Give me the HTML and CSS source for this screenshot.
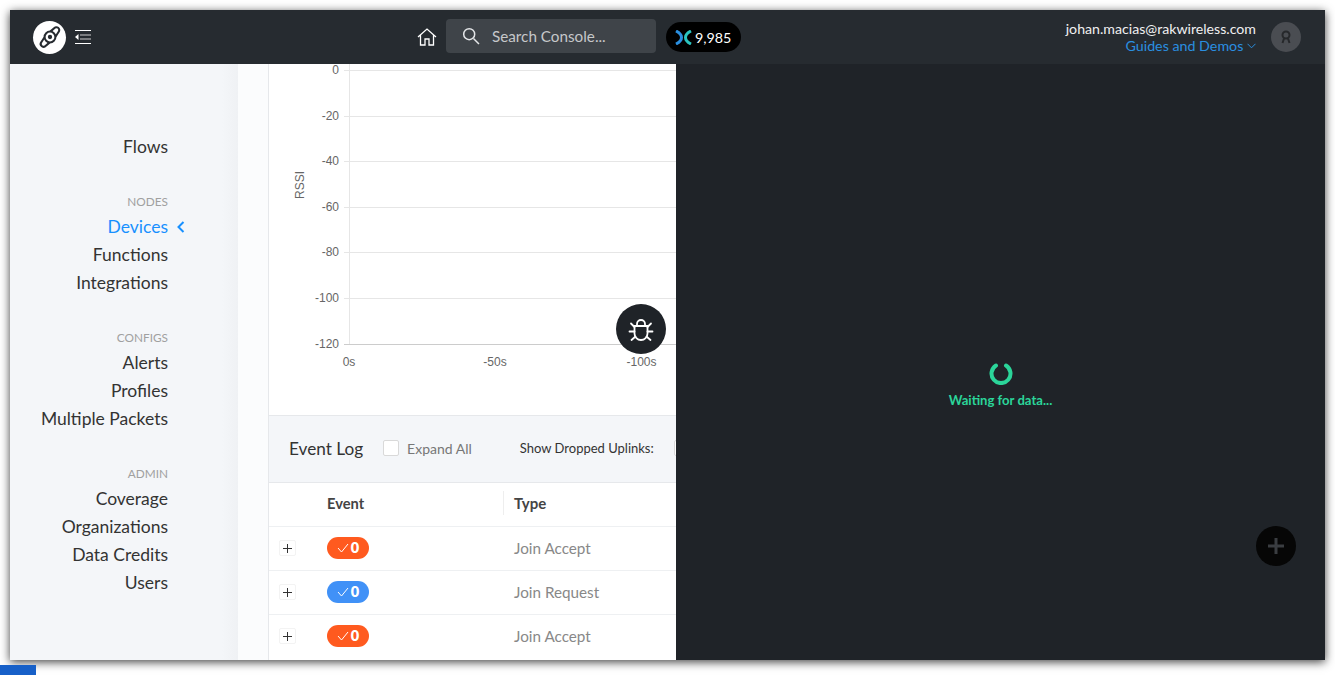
FILE: index.html
```html
<!DOCTYPE html>
<html lang="en">
<head>
<meta charset="utf-8">
<title>Console</title>
<link rel="stylesheet" href="styles.css">
</head>
<body>
<div class="window">
  <header class="topbar">
    <span class="logo">
      <svg width="26" height="26" viewBox="0 0 24 24" fill="none" stroke="#262b30" stroke-width="1.900"><circle cx="12" cy="12" r="5"/><circle cx="12" cy="12" r="2" fill="#262b30" stroke="none"/><path d="M12.500 6.800 15.800 4a2.500 2.500 0 1 1 4.200 3.200L17.200 11.500M11.500 17.200 8.200 20A2.500 2.500 0 1 1 4 16.800L6.800 12.500"/></svg>
    </span>
    <svg class="menu" width="16" height="14" viewBox="0 0 16 14" fill="none"><path d="M0 .5h16M0 13.500h16" stroke="#fff"/><path d="M5 5h11M5 9h11" stroke="#ccc"/><path d="M3.500 4v6L0 7z" fill="#fff"/></svg>
    <svg class="home" width="20" height="20" viewBox="0 0 20 20" fill="none" stroke="#fff" stroke-width="1.300"><path d="M1 10 10 2l9 8M3.500 8v10h4.500v-6h4v6h4.500V8"/></svg>
    <div class="search">
      <svg width="18" height="18" viewBox="0 0 18 18" fill="none" stroke="#e4e6e8" stroke-width="1.500"><circle cx="7.200" cy="7.200" r="5.500"/><path d="m11.500 11.500 5.500 5.500"/></svg>
      <span>Search Console...</span>
    </div>
    <div class="credits">
      <svg width="17" height="15" viewBox="0 0 17 15" fill="none" stroke-width="3"><path d="M1 1c4 2 5.500 4 5.500 6.500S5 12 1 14" stroke="#2a8fe0"/><path d="M16 1c-4 2-5.500 4-5.500 6.500S12 12 16 14" stroke="#2bc4c0"/></svg>
      <span>9,985</span>
    </div>
    <div class="account">
      <div class="account-text">
        <div class="email">johan.macias@rakwireless.com</div>
        <div class="guides">Guides and Demos
          <svg class="chev" width="9" height="6" viewBox="0 0 9 6" fill="none" stroke="#2a8fe0"><path d="m.5.800 4 4 4-4"/></svg>
        </div>
      </div>
      <span class="avatar">
        <svg width="12" height="14" viewBox="0 0 12 14" fill="none" stroke="#26282b" stroke-width="2"><circle cx="6" cy="5" r="3.500"/><path d="M2.500 13 4 8.500M9.500 13 8 8.500"/></svg>
      </span>
    </div>
  </header>

  <div class="workspace">
    <nav class="sidebar">
      <a class="nav-item">Flows</a>
      <div class="nav-group">
        <div class="nav-label">NODES</div>
        <a class="nav-item active">Devices
          <svg class="caret" width="8" height="12" viewBox="0 0 8 12" fill="none" stroke="#1890ff" stroke-width="2"><path d="M6.500 1 1.500 6l5 5"/></svg>
        </a>
        <a class="nav-item">Functions</a>
        <a class="nav-item">Integrations</a>
      </div>
      <div class="nav-group">
        <div class="nav-label">CONFIGS</div>
        <a class="nav-item">Alerts</a>
        <a class="nav-item">Profiles</a>
        <a class="nav-item">Multiple Packets</a>
      </div>
      <div class="nav-group">
        <div class="nav-label">ADMIN</div>
        <a class="nav-item">Coverage</a>
        <a class="nav-item">Organizations</a>
        <a class="nav-item">Data Credits</a>
        <a class="nav-item">Users</a>
      </div>
    </nav>

    <main class="content">
      <div class="card">
        <section class="chart">
          <svg width="407" height="351" viewBox="269 64 407 351" class="chart-svg">
            <g stroke="#e6e6e6">
              <path d="M344 70.500H676M344 116.500H676M344 161.500H676M344 207.500H676M344 252.500H676M344 298.500H676"/>
              <path d="M349.500 64V344"/>
            </g>
            <path d="M344 344.500H676" stroke="#ccc"/>
            <g class="tick ty">
              <text x="339" y="74">0</text>
              <text x="339" y="120">-20</text>
              <text x="339" y="165">-40</text>
              <text x="339" y="211">-60</text>
              <text x="339" y="256">-80</text>
              <text x="339" y="302">-100</text>
              <text x="339" y="348">-120</text>
            </g>
            <g class="tick tx">
              <text x="349" y="366">0s</text>
              <text x="495" y="366">-50s</text>
              <text x="641.500" y="366">-100s</text>
            </g>
            <text class="tick" transform="translate(304 199) rotate(-90)">RSSI</text>
          </svg>
          <button class="bug" aria-label="Debug">
            <svg width="26" height="26" viewBox="0 0 26 26" fill="none" stroke="#fff" stroke-width="1.800" stroke-linecap="round"><path d="M6.500 10h13v7.500a6.500 6.500 0 0 1-13 0z"/><path d="M9 10V8a4 4 0 0 1 8 0v2M6.500 11 3 7.500M19.500 11 23 7.500M6.500 15.500H1.500M19.500 15.500h5M7.500 20.500 3.500 24M18.500 20.500l4 3.500"/></svg>
          </button>
        </section>
        <section class="log-head">
          <h2>Event Log</h2>
          <span class="check"></span>
          <span class="expand">Expand All</span>
          <span class="dropped">Show Dropped Uplinks:</span>
          <span class="check dropped-check"></span>
        </section>
        <div class="table">
          <div class="row head">
            <span class="c-plus"></span>
            <span class="c-event">Event</span>
            <span class="c-type">Type</span>
          </div>
          <div class="row">
            <span class="c-plus"><i class="plus"></i></span>
            <span class="c-event"><b class="badge orange"><svg width="12" height="10" viewBox="0 0 12 10" fill="none" stroke="#fff"><path d="m1 5 3.500 4L11 1"/></svg>0</b></span>
            <span class="c-type">Join Accept</span>
          </div>
          <div class="row">
            <span class="c-plus"><i class="plus"></i></span>
            <span class="c-event"><b class="badge blue"><svg width="12" height="10" viewBox="0 0 12 10" fill="none" stroke="#fff"><path d="m1 5 3.500 4L11 1"/></svg>0</b></span>
            <span class="c-type">Join Request</span>
          </div>
          <div class="row">
            <span class="c-plus"><i class="plus"></i></span>
            <span class="c-event"><b class="badge orange"><svg width="12" height="10" viewBox="0 0 12 10" fill="none" stroke="#fff"><path d="m1 5 3.500 4L11 1"/></svg>0</b></span>
            <span class="c-type">Join Accept</span>
          </div>
        </div>
      </div>
    </main>

    <aside class="panel">
      <svg class="spinner" width="24" height="24" viewBox="0 0 24 24" fill="none" stroke="#2bd59a" stroke-width="4" stroke-linecap="round"><path d="M7 4.500a9.500 9.500 0 1 0 10 0"/></svg>
      <div class="waiting">Waiting for data...</div>
      <button class="fab" aria-label="Add">
        <svg width="18" height="18" viewBox="0 0 18 18" stroke="#3a3d41" stroke-width="3"><path d="M9 1v16M1 9h16"/></svg>
      </button>
    </aside>
  </div>
</div>
<div class="corner"></div>
</body>
</html>
```
FILE: styles.css
```css
* { box-sizing: border-box; }
html, body { height: 100%; }
body {
  margin: 0;
  padding: 10px;
  background: #fff;
  overflow: hidden;
  font-family: Lato, "Liberation Sans", sans-serif;
  color: #333;
}
.window {
  width: 1315px;
  height: 650px;
  display: flex;
  flex-direction: column;
  overflow: hidden;
  box-shadow: 0 2px 9px rgba(0, 0, 0, .75);
}
.topbar {
  flex: none;
  height: 54px;
  display: flex;
  align-items: center;
  padding: 0 24px 0 23px;
  background: #262b30;
}
.logo {
  width: 33px;
  height: 33px;
  border-radius: 50%;
  background: #fff;
  display: flex;
  align-items: center;
  justify-content: center;
}
.menu { margin-left: 9px; }
.home { margin-left: 326px; }
.search {
  margin-left: 9px;
  width: 210px;
  height: 34px;
  margin-top: -3px;
  padding: 0 16px;
  display: flex;
  align-items: center;
  gap: 12px;
  background: #3f4449;
  border-radius: 4px;
  color: #c6c8ca;
  font-size: 15.250px;
}
.credits {
  margin-left: 10px;
  width: 75px;
  height: 30px;
  padding-left: 9px;
  display: flex;
  align-items: center;
  gap: 3px;
  background: #000;
  border-radius: 15px;
  color: #fff;
  font-size: 14.300px;
}
.account {
  margin-left: auto;
  display: flex;
  align-items: center;
  gap: 15px;
}
.account-text { text-align: right; }
.email { color: #f0f0f0; font-size: 14.170px; line-height: 17px; }
.guides { color: #2a8fe0; font-size: 14.250px; line-height: 17px; }
.chev { margin-bottom: 2px; }
.avatar {
  width: 30px;
  height: 30px;
  border-radius: 50%;
  background: #4a4d52;
  display: flex;
  align-items: center;
  justify-content: center;
}
.workspace {
  flex: 1;
  min-height: 0;
  display: flex;
}
.sidebar {
  flex: none;
  width: 228px;
  padding: 69px 70px 0 0;
  background: linear-gradient(to right, #f4f6f9 93%, #eff1f4);
  text-align: right;
}
.nav-item {
  display: block;
  position: relative;
  height: 28px;
  line-height: 28px;
  font-size: 17.500px;
  color: #333;
}
.nav-item.active { color: #1890ff; }
.caret { position: absolute; right: -17px; top: 8px; }
.nav-group { margin-top: 30px; }
.nav-label {
  height: 22px;
  line-height: 22px;
  font-size: 11.800px;
  color: #a0a0a0;
}
.content {
  flex: none;
  width: 438px;
  padding-left: 30px;
  background: #fbfcfd;
}
.card {
  height: 100%;
  border-left: 1px solid #e6e8eb;
  background: #fff;
  overflow: hidden;
}
.chart {
  position: relative;
  height: 352px;
  border-bottom: 1px solid #e6e8eb;
}
.chart-svg { display: block; }
.tick {
  font-family: "Liberation Sans", sans-serif;
  font-size: 12px;
  fill: #666;
}
.ty { text-anchor: end; }
.tx { text-anchor: middle; }
.bug {
  position: absolute;
  left: 347px;
  top: 240px;
  width: 50px;
  height: 50px;
  padding: 0;
  border: 0;
  border-radius: 50%;
  background: #1f2328;
  display: flex;
  align-items: center;
  justify-content: center;
}
.log-head {
  height: 67px;
  display: flex;
  align-items: center;
  padding: 0 0 2px 20px;
  background: #f4f6f9;
  border-bottom: 1px solid #e6e8eb;
  white-space: nowrap;
}
.log-head h2 {
  margin: 0;
  font-size: 17.200px;
  font-weight: 400;
  color: #333;
}
.check {
  flex: none;
  width: 16px;
  height: 16px;
  margin-left: 20px;
  background: #fff;
  border: 1px solid #d9d9d9;
  border-radius: 2px;
}
.expand { margin-left: 8px; font-size: 14px; color: #777; }
.dropped { margin-left: 48px; font-size: 13px; color: #333; }
.dropped-check { margin-left: 20px; }
.row {
  height: 44px;
  padding-bottom: 1px;
  display: flex;
  align-items: center;
  border-bottom: 1px solid #eef0f2;
  white-space: nowrap;
}
.row:last-child { border-bottom: 0; padding-bottom: 2px; }
.row.head { padding-bottom: 3px; font-size: 14.700px; font-weight: 700; color: #444; }
.c-plus { flex: none; width: 58px; padding-left: 10px; display: flex; }
.c-event { flex: none; width: 176px; }
.c-type { font-size: 15.250px; color: #888; padding: 0 0 1px 11px; }
.head .c-type { font-size: 15px; color: #444; border-left: 1px solid #eee; line-height: 24px; padding: 0 0 0 10px; }
.plus {
  width: 17px;
  height: 16px;
  border: 1px solid #f3f3f3;
  border-radius: 2px;
  background:
    linear-gradient(#333, #333) center / 9px 1px no-repeat,
    linear-gradient(#333, #333) center / 1px 9px no-repeat;
}
.badge {
  width: 42px;
  height: 22px;
  padding-bottom: 1px;
  border-radius: 11px;
  display: flex;
  align-items: center;
  justify-content: center;
  gap: 2px;
  color: #fff;
  font-size: 14.500px;
  font-weight: 800;
}
.orange { background: #ff5a1f; }
.blue { background: #4091f7; }
.panel {
  position: relative;
  flex: 1;
  background: #1f2328;
  display: flex;
  flex-direction: column;
  align-items: center;
  padding-top: 297px;
}
.spinner { display: block; }
.waiting {
  margin-top: 7px;
  font-size: 13.100px;
  font-weight: 700;
  color: #2bd59a;
}
.fab {
  position: absolute;
  left: 580px;
  top: 462px;
  width: 40px;
  height: 40px;
  padding: 0;
  border: 0;
  border-radius: 50%;
  background: #060606;
  display: flex;
  align-items: center;
  justify-content: center;
}
.corner {
  position: fixed;
  left: 0;
  bottom: 0;
  width: 36px;
  height: 10px;
  background: #1760c8;
}
```
